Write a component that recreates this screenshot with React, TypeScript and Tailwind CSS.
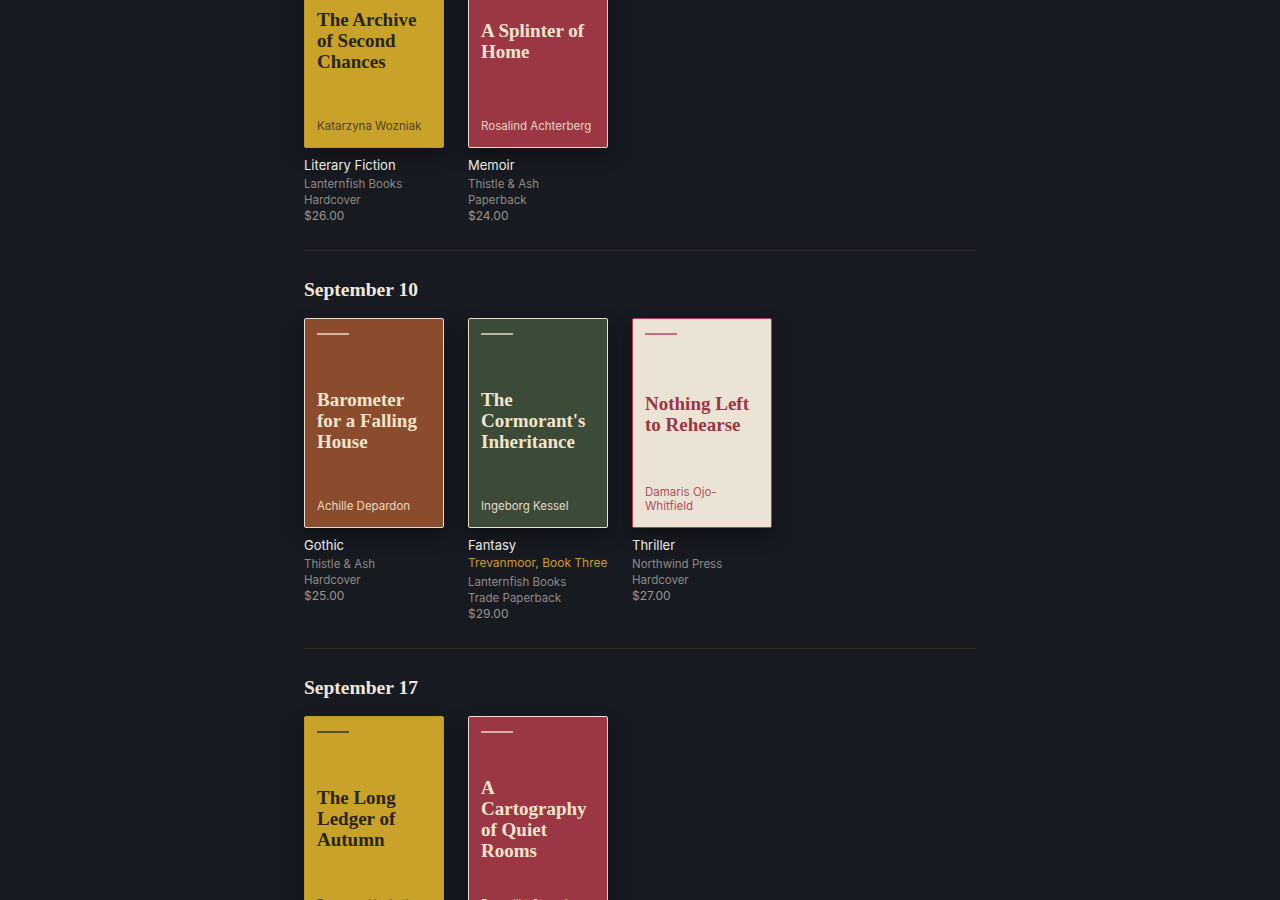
import React from 'react';

type Theme = 'mustard' | 'wine' | 'rust' | 'moss' | 'paper';

type Book = {
  title: string;
  author: string;
  genre: string;
  series?: string;
  publisher: string;
  format: string;
  price: string;
  theme: Theme;
};

type Release = {
  date: string;
  books: Book[];
};

// cover palette: bg + border, title, author, rule
const themes: Record<Theme, { cover: string; title: string; author: string; rule: string }> = {
  mustard: {
    cover: 'bg-[#c9a229] border-[#bb962a]',
    title: 'text-[#2a2416]',
    author: 'text-[#4f431f]',
    rule: 'bg-[#5a4c22]',
  },
  wine: {
    cover: 'bg-[#9b3644] border-[#eadfcd]',
    title: 'text-[#f1e4cc]',
    author: 'text-[#ecd3c2]',
    rule: 'bg-[#d6b0ab]',
  },
  rust: {
    cover: 'bg-[#8b4c2e] border-[#eadfcd]',
    title: 'text-[#f1e4cc]',
    author: 'text-[#efd8bd]',
    rule: 'bg-[#d6b8a2]',
  },
  moss: {
    cover: 'bg-[#3c4a38] border-[#eadfcd]',
    title: 'text-[#f1e4cc]',
    author: 'text-[#e3dcc6]',
    rule: 'bg-[#b8b8a4]',
  },
  paper: {
    cover: 'bg-[#ebe3d5] border-[#b23e4e]',
    title: 'text-[#9b3644]',
    author: 'text-[#b0505f]',
    rule: 'bg-[#c2707a]',
  },
};

const releases: Release[] = [
  {
    date: 'September 3',
    books: [
      {
        title: 'The Archive of Second Chances',
        author: 'Katarzyna Wozniak',
        genre: 'Literary Fiction',
        publisher: 'Lanternfish Books',
        format: 'Hardcover',
        price: '$26.00',
        theme: 'mustard',
      },
      {
        title: 'A Splinter of Home',
        author: 'Rosalind Achterberg',
        genre: 'Memoir',
        publisher: 'Thistle & Ash',
        format: 'Paperback',
        price: '$24.00',
        theme: 'wine',
      },
    ],
  },
  {
    date: 'September 10',
    books: [
      {
        title: 'Barometer for a Falling House',
        author: 'Achille Depardon',
        genre: 'Gothic',
        publisher: 'Thistle & Ash',
        format: 'Hardcover',
        price: '$25.00',
        theme: 'rust',
      },
      {
        title: "The Cormorant's Inheritance",
        author: 'Ingeborg Kessel',
        genre: 'Fantasy',
        series: 'Trevanmoor, Book Three',
        publisher: 'Lanternfish Books',
        format: 'Trade Paperback',
        price: '$29.00',
        theme: 'moss',
      },
      {
        title: 'Nothing Left to Rehearse',
        author: 'Damaris Ojo-Whitfield',
        genre: 'Thriller',
        publisher: 'Northwind Press',
        format: 'Hardcover',
        price: '$27.00',
        theme: 'paper',
      },
    ],
  },
  {
    date: 'September 17',
    books: [
      {
        title: 'The Long Ledger of Autumn',
        author: 'Bronwyn Hesketh',
        genre: 'Historical Fiction',
        publisher: 'Northwind Press',
        format: 'Hardcover',
        price: '$28.00',
        theme: 'mustard',
      },
      {
        title: 'A Cartography of Quiet Rooms',
        author: 'Benedikt Strand',
        genre: 'Literary Fiction',
        publisher: 'Thistle & Ash',
        format: 'Hardcover',
        price: '$27.00',
        theme: 'wine',
      },
    ],
  },
];

const serif = "font-['Liberation_Serif',Georgia,serif]";

function Cover({ book }: { book: Book }) {
  const t = themes[book.theme];
  return (
    <div
      className={`flex aspect-[2/3] w-[140px] flex-col justify-between rounded-[2px] border px-3 py-3.5 shadow-[0_8px_18px_rgba(0,0,0,0.35)] ${t.cover}`}
    >
      <div className={`mb-[7px] h-0.5 w-8 ${t.rule}`} />
      <h3 className={`${serif} text-[19px] font-bold leading-[21px] ${t.title}`}>{book.title}</h3>
      <p className={`text-[11.5px] leading-[14px] ${t.author}`}>{book.author}</p>
    </div>
  );
}

function BookCard({ book }: { book: Book }) {
  return (
    <div className="w-[140px]">
      <Cover book={book} />
      <div className="mt-2">
        <p className="text-[13px] leading-[18px] text-[#ece9e4]">{book.genre}</p>
        {book.series && (
          <p className="whitespace-nowrap text-[12px] leading-[18px] text-[#cf9a2a]">{book.series}</p>
        )}
        <p className="mt-0.5 text-[11.5px] leading-4 text-[#8f8a84]">{book.publisher}</p>
        <p className="text-[11.5px] leading-4 text-[#8f8a84]">{book.format}</p>
        <p className="text-[12px] leading-[15px] text-[#9a958e]">{book.price}</p>
      </div>
    </div>
  );
}

export default function App() {
  return (
    <div className="min-h-screen overflow-hidden bg-[#171a21] font-['Inter','Liberation_Sans',sans-serif]">
      <main className="mx-auto -mt-[129px] max-w-2xl">
        {releases.map((release, i) => (
          <section
            key={release.date}
            className={`pb-[27px] pt-[25px] ${i > 0 ? 'border-t border-[#342f22]' : ''}`}
          >
            <h2 className={`${serif} mb-3.5 text-[19.5px] font-bold leading-7 text-[#efe7da]`}>
              {release.date}
            </h2>
            <div className="flex gap-6">
              {release.books.map((book) => (
                <BookCard key={book.title} book={book} />
              ))}
            </div>
          </section>
        ))}
      </main>
    </div>
  );
}
